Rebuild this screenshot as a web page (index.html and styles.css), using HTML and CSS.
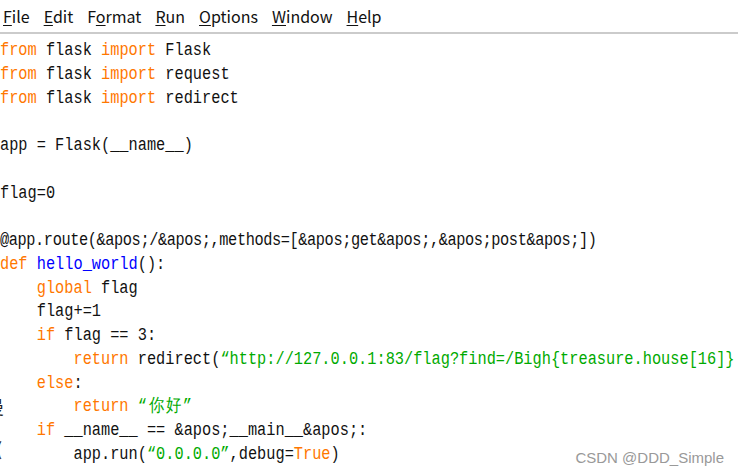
FILE: index.html
```html
<!DOCTYPE html>
<html lang="en">
<head>
    <meta charset="UTF-8">
    <meta name="viewport" content="width=device-width, initial-scale=1.0">
    <title>app.py - IDLE</title>
    <link rel="stylesheet" href="styles.css">
</head>
<body>
    <div class="window">
        <div class="menubar">
            <span class="menu"><u>F</u>ile</span>
            <span class="menu"><u>E</u>dit</span>
            <span class="menu">F<u>o</u>rmat</span>
            <span class="menu"><u>R</u>un</span>
            <span class="menu"><u>O</u>ptions</span>
            <span class="menu"><u>W</u>indow</span>
            <span class="menu"><u>H</u>elp</span>
        </div>

        <div class="editor">
            <div class="gutter">
                <span class="cut cut-a">曼</span>
                <span class="cut cut-b">(</span>
            </div>
<pre class="code"><span class="kw">from</span> flask <span class="kw">import</span> Flask
<span class="kw">from</span> flask <span class="kw">import</span> request
<span class="kw">from</span> flask <span class="kw">import</span> redirect

app = Flask(__name__)

flag=0

<span class="tight">@app.route(&amp;apos;/&amp;apos;,methods=[&amp;apos;get&amp;apos;,&amp;apos;post&amp;apos;])</span>
<span class="kw">def</span> <span class="fn">hello_world</span>():
    <span class="kw">global</span> flag
    flag+=1
    <span class="kw">if</span> flag == 3:
        <span class="kw">return</span> redirect(<span class="str">“http://127.0.0.1:83/flag?find=/Bigh{treasure.house[16]}</span>
    <span class="kw">else</span>:
        <span class="kw">return</span> <span class="str">“<span class="cjk">你好</span>”</span>
    <span class="kw">if</span> __name__ == &amp;apos;__main__&amp;apos;:
        app.run(<span class="str">“0.0.0.0”</span>,debug=<span class="kw">True</span>)</pre>
        </div>

        <div class="watermark">CSDN @DDD_Simple</div>
    </div>
</body>
</html>
```

FILE: styles.css
```css
html, body {
    margin: 0;
    padding: 0;
    background: #fff;
    overflow: hidden;
}
.window {
    position: relative;
    width: 738px;
    height: 474px;
    overflow: hidden;
}
.menubar {
    display: flex;
    gap: 14px;
    height: 32px;
    padding-left: 3px;
    align-items: center;
    font-family: "Noto Sans CJK SC", "Noto Sans", sans-serif;
    font-size: 16px;
    color: #111;
    border-bottom: 2px solid #cbcbcb;
}
.menu u {
    text-decoration-thickness: 1px;
    text-underline-offset: 2px;
}
.editor {
    display: flex;
    padding-top: 5px;
}
.gutter {
    width: 1px;
    position: relative;
}
.cut {
    position: absolute;
    left: -14px;
    font-family: "Noto Sans CJK SC", serif;
    font-size: 18px;
    color: #222;
}
.cut-a {
    top: 354px;
}
.cut-b {
    top: 396px;
    left: -4px;
}
.code {
    margin: 0;
    font-family: "Liberation Mono", monospace;
    font-size: 18px;
    line-height: 23.75px;
    color: #111;
    white-space: pre;
    transform: scaleX(0.85);
    transform-origin: left top;
}
.tight {
    letter-spacing: -0.48px;
}
.cjk {
    letter-spacing: 2px;
    margin-left: 2px;
}
.kw {
    color: #ff7700;
}
.fn {
    color: #0000ff;
}
.str {
    color: #00aa00;
}
.watermark {
    position: absolute;
    right: 14px;
    bottom: 8px;
    font-family: "Liberation Sans", Arial, sans-serif;
    font-size: 15px;
    color: #999;
}
```
